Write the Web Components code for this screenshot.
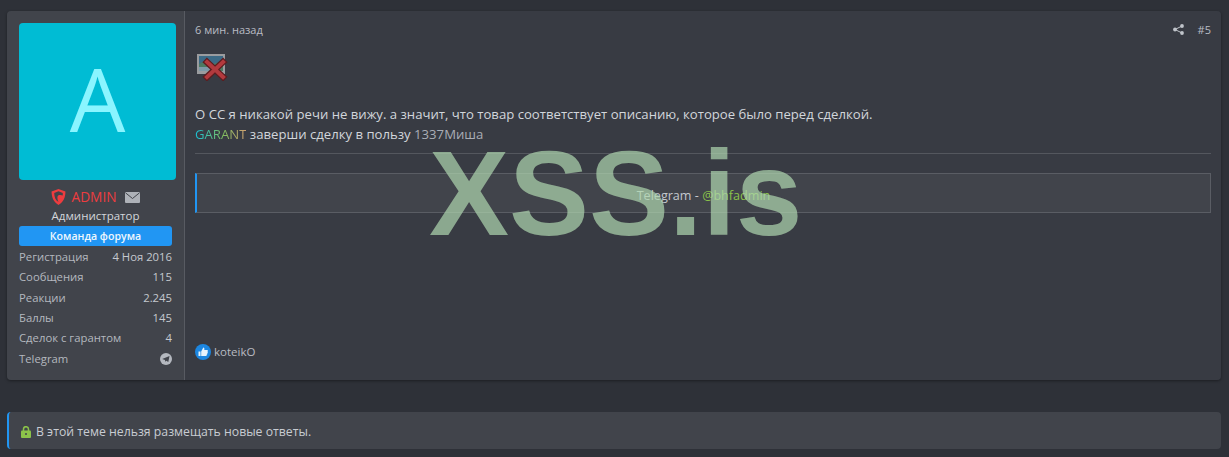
<!DOCTYPE html>
<html lang="ru"><head><meta charset="utf-8"><style>
html,body{margin:0;padding:0;height:457px;overflow:hidden;background:#2e3138}
body{font:13px/1.4 "Open Sans","Noto Sans",sans-serif;color:#c8ccd2}
</style></head><body>
<forum-page></forum-page>
<script>
function def(name,css,html){customElements.define(name,class extends HTMLElement{constructor(){super();this.attachShadow({mode:'open'}).innerHTML='<style>'+css+'</style>'+html;}});}
def('stat-row',`:host{display:flex;justify-content:space-between;align-items:center;color:#b4b8bf;height:20.4px;font-size:11.3px;line-height:16px}::slotted([slot=v]){color:#c4c8ce}`,`<slot></slot><slot name="v"></slot>`);
def('user-cell',`:host{display:flex;flex-direction:column;box-sizing:border-box;width:178px;flex:none;padding:12px 12px 0;background:#41444b;border-right:1px solid #585b62;border-radius:4px 0 0 4px}
.ava{box-sizing:border-box;width:157px;height:157px;padding-bottom:8px;background:#00bcd4;border-radius:4px;display:flex;align-items:center;justify-content:center;color:#8af5ff;font:88px/1 "Open Sans",sans-serif}
.name{display:flex;align-items:center;justify-content:center;gap:5px;margin-top:8px;height:18px;color:#ee3c3f;font-size:13.7px}
.title{text-align:center;color:#d3d6da;font-size:11.5px;line-height:17px;margin-top:1px}
.banner{background:#2196f3;color:#eef6fd;border-radius:3px;height:20px;line-height:20px;text-align:center;font-size:10.6px;font-weight:600;margin:2px 0 0}`,`<div class="ava">A</div>
<div class="name"><svg width="15" height="16" viewBox="0 0 14 15"><path fill="#ee3c3f" d="M7 0 13.5 2.400C13.5 8 11.500 12.500 7 15 2.500 12.500.5 8 .5 2.400Z"/><path fill="#41444b" d="M7 2.200 3 3.700C3 7.500 4.200 10.500 7 12.300 5.800 9.500 5.500 6.500 7 5.800 8.500 5.300 10 5.600 11 6V3.700Z"/></svg><span>ADMIN</span><svg style="margin-left:3px" width="15" height="11" viewBox="0 0 15 11"><rect width="15" height="11" rx="1" fill="#aeb2b8"/><path d="M.5.800 7.500 6.500 14.500.800" fill="none" stroke="#41444b"/></svg></div>
<div class="title">Администратор</div><div class="banner">Команда форума</div>
<div style="margin-top:.6px"><stat-row>Регистрация<span slot="v">4 Ноя 2016</span></stat-row><stat-row>Сообщения<span slot="v">115</span></stat-row><stat-row>Реакции<span slot="v">2.245</span></stat-row><stat-row>Баллы<span slot="v">145</span></stat-row><stat-row>Сделок с гарантом<span slot="v">4</span></stat-row><stat-row>Telegram<svg slot="v" style="display:block" width="12" height="12" viewBox="0 0 12 12"><circle cx="6" cy="6" r="6" fill="#b4b8bf"/><path fill="#41444b" d="M2.200 6 9.500 3 8.300 9 6.300 7.700 5.200 8.800 5 7Z"/></svg></stat-row></div>`);
def('post-cell',`:host{position:relative;display:flex;flex-direction:column;flex:1;min-width:0;padding:11px 10px 0 10px;background:#383b43;border-radius:0 4px 4px 0;font-size:13.15px}
.head{display:flex;justify-content:space-between;align-items:center;height:16px;font-size:11px;color:#b8bcc3}
.right{display:flex;align-items:center;gap:14px}
.img{display:block;margin:16px 0 0 2px;filter:blur(.3px)}
.txt{margin:23px 0 0;line-height:20px;color:#d2d6db}
.g{background:linear-gradient(90deg,#17c0d8,#7fbf60 55%,#d2a070);-webkit-background-clip:text;background-clip:text;color:transparent}
.m{color:#a9adb5}
.sep{height:1px;background:#54575e;margin:9px 0 19px}
.quote{box-sizing:border-box;height:40px;padding-top:5px;background:#41444b;border:1px solid #5a5d64;border-left:2px solid #2196f3;display:flex;align-items:center;justify-content:center;color:#c4c8ce;font-size:12.6px}
.quote b{font-weight:400;color:#8bc34a}
.react{margin-top:auto;margin-bottom:18px;display:flex;align-items:center;gap:3px;height:20px;font-size:11.5px;color:#b8bcc2}
.wm{position:absolute;left:244px;top:113px;font:700 120px/1.15 "Liberation Sans",sans-serif;color:rgba(175,215,175,.7);pointer-events:none;white-space:nowrap}`,`<div class="head"><span>6 мин. назад</span><span class="right"><svg width="11" height="11" viewBox="0 0 11 11"><circle cx="2" cy="5.500" r="1.900" fill="#c0c4ca"/><circle cx="9" cy="2" r="1.900" fill="#c0c4ca"/><circle cx="9" cy="9" r="1.900" fill="#c0c4ca"/><path d="M9 2 2 5.500 9 9" fill="none" stroke="#c0c4ca"/></svg><span>#5</span></span></div>
<svg class="img" width="31" height="27" viewBox="0 0 31 27"><rect x="0" y="0" width="28" height="20" fill="#9a9c9f"/><rect x="2" y="2" width="24" height="15" fill="#3c6a86"/><path d="M2 10 9 6 16 10 26 7V17H2Z" fill="#4d7a63"/><path d="M2 13H14V17H2Z" fill="#7d9aa8"/><path d="M10 8 26 23M26 8 10 23" stroke="#5c1c1f" stroke-width="6.500" stroke-linecap="square"/><path d="M10 8 26 23M26 8 10 23" stroke="#b23a3e" stroke-width="4" stroke-linecap="square"/></svg>
<div class="txt">О СС я никакой речи не вижу. а значит, что товар соответствует описанию, которое было перед сделкой.<br><span class="g">GARANT</span> заверши сделку в пользу <span class="m">1337Миша</span></div>
<div class="sep"></div><div class="quote"><span>Telegram - <b>@bhfadmin</b></span></div>
<div class="react"><svg width="16" height="16" viewBox="0 0 16 16"><circle cx="8" cy="8" r="8" fill="#1c86e0"/><path fill="#e8f3fc" d="M3.500 7.500H5.500V12H3.500ZM6.200 7.500 8.300 3.500C9.300 3.500 9.600 4.500 9.300 6H12.300C13 6 13 7 12.600 7.500 13 8 12.800 9 12.300 9.200 12.500 9.900 12.200 10.500 11.700 10.700 11.800 11.500 11.400 12 10.800 12H6.200Z"/></svg><span>koteikO</span></div>
<div class="wm">XSS.is</div>`);
def('post-card',`:host{display:flex;height:369px;margin:11px 8px 0 7px;border-radius:4px;box-shadow:0 1px 3px rgba(0,0,0,.4)}`,`<slot></slot>`);
def('lock-notice',`:host{display:flex;align-items:center;gap:5px;box-sizing:border-box;height:37px;margin:32px 8px 0 7px;padding:3px 0 0 12px;background:#41444b;border-left:2px solid #2196f3;border-radius:4px;font-size:12.27px;color:#c8ccd2}`,`<svg width="10" height="12" viewBox="0 0 10 12"><rect y="4.500" width="10" height="7.500" rx="1" fill="#8bc34a"/><path d="M2.500 5V3.200a2.500 2.500 0 0 1 5 0V5" fill="none" stroke="#8bc34a" stroke-width="1.500"/><circle cx="5" cy="8" r="1" fill="#41444b"/></svg><slot></slot>`);
def('forum-page',`:host{display:block}`,`<post-card><user-cell></user-cell><post-cell></post-cell></post-card><lock-notice>В этой теме нельзя размещать новые ответы.</lock-notice>`);
</script></body></html>
